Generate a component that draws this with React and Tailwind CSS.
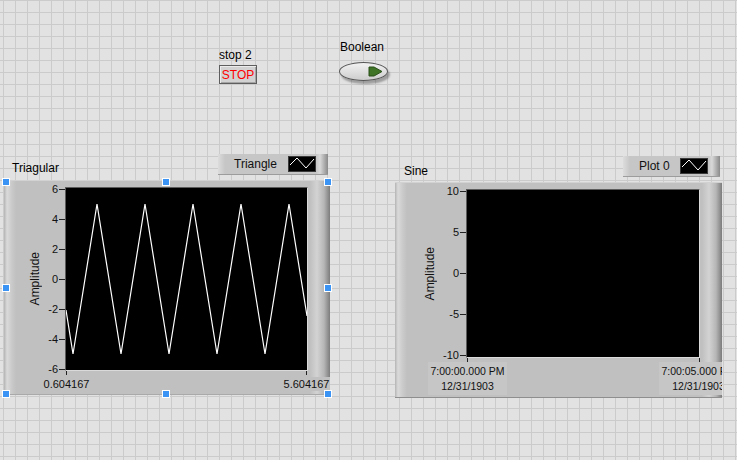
const sans = "font-['Liberation_Sans',Arial,sans-serif]";

function Handle({ pos }) {
  return <div className={`absolute z-20 w-[8px] h-[8px] bg-[#3b93f4] border border-white ${pos}`} />;
}

function TraceIcon() {
  return (
    <div className="w-[28px] h-[16px] bg-black border border-[#3a3a3a] flex items-center justify-center">
      <svg width="26" height="14" viewBox="0 0 26 14">
        <polyline points="1,8 8,1 17,11 25,2" fill="none" stroke="white" strokeWidth="1" />
      </svg>
    </div>
  );
}

function Legend({ name, width }) {
  return (
    <div
      className={`${width} h-[21px] flex items-center justify-between pl-[16px] pr-[12px] border-b border-[#9c9c9c] bg-[linear-gradient(to_right,#dcdcdc_0px,#c6c6c6_7px,#c6c6c6_calc(100%_-_12px),#d8d8d8_calc(100%_-_8px),#8a8a8a_100%)]`}
    >
      <span className="text-[12px] leading-[14px] text-[#111]">{name}</span>
      <TraceIcon />
    </div>
  );
}

function YTick({ v }) {
  return (
    <div className="flex items-center h-[12px]">
      <span className="text-[11px] leading-[12px] text-[#111]">{v}</span>
      <span className="ml-[1px] w-[6px] h-px bg-[#222]" />
    </div>
  );
}

const LeftStrip = () => (
  <div className="w-[12px] shrink-0 bg-[linear-gradient(to_right,#b4b4b4_0%,#dadada_25%,#cacaca_65%,#c0c0c0_100%)]" />
);
const RightStrip = () => (
  <div className="w-[20px] shrink-0 bg-[linear-gradient(to_right,#c0c0c0_0%,#d3d3d3_35%,#b6b6b6_70%,#7c7c7c_100%)]" />
);

function TriangleGraph() {
  return (
    <div className="relative w-[326px] flex flex-col">
      <div className="flex items-end justify-between h-[21px]">
        <span className="pl-[8px] -mb-[1px] text-[12px] leading-[16px] text-black">Triagular</span>
        <div className="mr-[2px]">
          <Legend name="Triangle" width="w-[110px]" />
        </div>
      </div>
      <div className="mt-[5px] h-[215px] flex bg-[#c0c0c0] border-t border-b border-[#d2d2d2] border-b-[#a9a9a9]">
        <LeftStrip />
        <div className="w-[294px] shrink-0 flex flex-col">
          <div className="flex items-start">
            <div className="w-[30px] h-[184px] mt-[6px] flex items-center justify-end pr-[5px]">
              <span className="[writing-mode:vertical-rl] rotate-180 text-[12px] leading-[12px] text-[#111]">Amplitude</span>
            </div>
            <div className="w-[19px] h-[192px] mt-[2px] flex flex-col justify-between items-end">
              {["6", "4", "2", "0", "-2", "-4", "-6"].map((v) => (
                <YTick key={v} v={v} />
              ))}
            </div>
            <div className="w-[243px] h-[184px] mt-[6px] bg-black border border-t-[#5c5c5c] border-l-[#5c5c5c] border-r-[#dadada] border-b-[#dadada]">
              <svg width="241" height="182" viewBox="0 0 241 182">
                <polyline
                  points="0,122 7,166 31,16 55,166 79,16 103,166 127,16 151,166 175,16 199,166 223,16 241,128"
                  fill="none"
                  stroke="white"
                  strokeWidth="1.2"
                />
              </svg>
            </div>
          </div>
          <div className="flex -mt-[4px]">
            <div className="relative z-10 w-[49px] ml-[26px] shrink-0 flex flex-col items-center">
              <div className="w-px h-[4px] bg-[#222]" />
              <span className="mt-[2px] px-[1px] bg-[#c0c0c0] text-[11px] leading-[14px] text-[#111]">0.604167</span>
            </div>
            <div className="relative z-10 w-[49px] ml-[191px] shrink-0 flex flex-col items-center">
              <div className="w-px h-[4px] bg-[#222]" />
              <span className="mt-[2px] px-[1px] bg-[#c0c0c0] text-[11px] leading-[14px] text-[#111]">5.604167</span>
            </div>
          </div>
        </div>
        <RightStrip />
      </div>
      <Handle pos="left-[-2px] top-[24px]" />
      <Handle pos="left-[158px] top-[24px]" />
      <Handle pos="left-[320px] top-[24px]" />
      <Handle pos="left-[-2px] top-[130px]" />
      <Handle pos="left-[320px] top-[130px]" />
      <Handle pos="left-[-2px] top-[236px]" />
      <Handle pos="left-[158px] top-[236px]" />
      <Handle pos="left-[320px] top-[236px]" />
    </div>
  );
}

function SineGraph() {
  return (
    <div className="w-[327px] flex flex-col">
      <div className="flex items-end justify-between h-[21px]">
        <span className="pl-[9px] -mb-[2px] text-[12px] leading-[16px] text-black">Sine</span>
        <div className="mr-[2px]">
          <Legend name="Plot 0" width="w-[97px]" />
        </div>
      </div>
      <div className="mt-[5px] h-[216px] flex overflow-hidden bg-[#c0c0c0] border-t border-b border-[#d2d2d2] border-b-[#8e8e8e]">
        <LeftStrip />
        <div className="w-[295px] shrink-0 flex flex-col">
          <div className="flex items-start">
            <div className="w-[33px] h-[169px] mt-[6px] flex items-center justify-end pr-[4px]">
              <span className="[writing-mode:vertical-rl] rotate-180 text-[12px] leading-[12px] text-[#111]">Amplitude</span>
            </div>
            <div className="w-[26px] h-[176px] mt-[2px] flex flex-col justify-between items-end">
              {["10", "5", "0", "-5", "-10"].map((v) => (
                <YTick key={v} v={v} />
              ))}
            </div>
            <div className="w-[234px] h-[169px] mt-[6px] bg-black border border-t-[#5c5c5c] border-l-[#5c5c5c] border-r-[#dadada] border-b-[#dadada]" />
          </div>
          <div className="flex -mt-[3px]">
            <div className="relative z-10 w-[79px] ml-[21px] shrink-0 flex flex-col items-center">
              <div className="w-px h-[4px] bg-[#222]" />
              <div className="w-[79px] h-[33px] pt-[2px] bg-[#c6c6c6] text-center text-[10.5px] leading-[15px] text-[#111]">
                <div className="whitespace-nowrap">7:00:00.000 PM</div>
                <div>12/31/1903</div>
              </div>
            </div>
            <div className="relative z-10 w-[63px] ml-[152px] shrink-0 overflow-hidden">
              <div className="ml-[40px] w-px h-[4px] bg-[#222]" />
              <div className="w-[79px] h-[33px] pt-[2px] bg-[#c6c6c6] text-center text-[10.5px] leading-[15px] text-[#111]">
                <div className="whitespace-nowrap">7:00:05.000 PM</div>
                <div>12/31/1903</div>
              </div>
            </div>
          </div>
        </div>
        <RightStrip />
      </div>
    </div>
  );
}

export default function App() {
  return (
    <div
      className={`${sans} relative w-[737px] h-[460px] overflow-hidden bg-[#e2e2e2] [background-image:linear-gradient(to_right,#cbcbcb_1px,transparent_1px),linear-gradient(to_bottom,#cbcbcb_1px,transparent_1px)] [background-size:12px_12px] [background-position:3px_0px]`}
    >
      <div className="flex items-start pl-[219px]">
        <div className="mt-[47px] flex flex-col">
          <span className="text-[12px] leading-[16px] text-black">stop 2</span>
          <div className="mt-[2px] w-[38px] h-[19px] flex items-center justify-center border border-[#5e5e5e] bg-[#d2d2d2] shadow-[inset_1px_1px_0_#ececec,inset_-1px_-1px_0_#a4a4a4] text-[12px] leading-[12px] text-[#ff0000]">
            STOP
          </div>
        </div>
        <div className="mt-[39px] ml-[82px] flex flex-col">
          <span className="pl-[1px] text-[12px] leading-[16px] text-black">Boolean</span>
          <div className="mt-[7px] w-[49px] h-[19px] rounded-[50%] border border-[#555] bg-[linear-gradient(to_bottom,#f2f2f2,#cdcdcd)] shadow-[2px_3px_2px_rgba(0,0,0,0.3)] flex items-center justify-end pr-[4px]">
            <svg width="15" height="11" viewBox="0 0 15 11">
              <polygon points="1,1 6,1 14,5.5 6,10 1,10" fill="#3f7326" stroke="#2a4f18" strokeWidth="1" />
            </svg>
          </div>
        </div>
      </div>
      <div className="flex items-start mt-[70px] pl-[4px]">
        <TriangleGraph />
        <div className="ml-[65px] mt-[2px]">
          <SineGraph />
        </div>
      </div>
    </div>
  );
}
